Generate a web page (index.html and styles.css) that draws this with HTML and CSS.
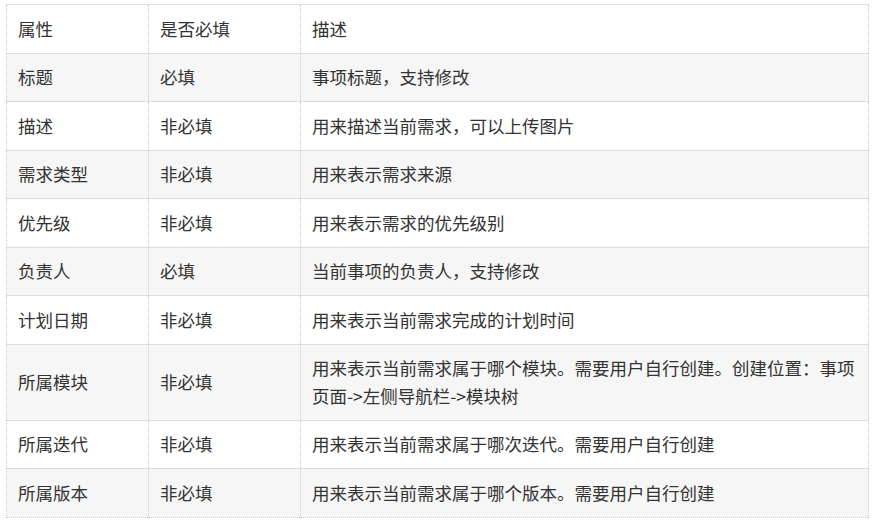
FILE: index.html
```html
<!DOCTYPE html>
<html lang="zh-CN">
<head>
<meta charset="utf-8">
<link rel="stylesheet" href="styles.css">
</head>
<body>
<table class="attr-table">
  <colgroup>
    <col class="col-a">
    <col class="col-b">
    <col class="col-c">
  </colgroup>
  <thead>
    <tr><th>属性</th><th>是否必填</th><th>描述</th></tr>
  </thead>
  <tbody>
    <tr><td>标题</td><td>必填</td><td>事项标题，支持修改</td></tr>
    <tr><td>描述</td><td>非必填</td><td>用来描述当前需求，可以上传图片</td></tr>
    <tr><td>需求类型</td><td>非必填</td><td>用来表示需求来源</td></tr>
    <tr><td>优先级</td><td>非必填</td><td>用来表示需求的优先级别</td></tr>
    <tr><td>负责人</td><td>必填</td><td>当前事项的负责人，支持修改</td></tr>
    <tr><td>计划日期</td><td>非必填</td><td>用来表示当前需求完成的计划时间</td></tr>
    <tr><td>所属模块</td><td>非必填</td><td>用来表示当前需求属于哪个模块。需要用户自行创建。创建位置：事项页面-&gt;左侧导航栏-&gt;模块树</td></tr>
    <tr><td>所属迭代</td><td>非必填</td><td>用来表示当前需求属于哪次迭代。需要用户自行创建</td></tr>
    <tr><td>所属版本</td><td>非必填</td><td>用来表示当前需求属于哪个版本。需要用户自行创建</td></tr>
  </tbody>
</table>
</body>
</html>
```

FILE: styles.css
```css
html, body {
  margin: 0;
  padding: 0;
  background: #ffffff;
}
body {
  padding: 4px 0 0 6px;
  font-family: "Noto Sans CJK SC", "Noto Sans", sans-serif;
  font-size: 17.5px;
  color: #333333;
}
.attr-table {
  border-collapse: collapse;
  width: 862px;
  table-layout: fixed;
  border: 1px dotted #c8c8c8;
}
.col-a { width: 142px; }
.col-b { width: 152px; }
.col-c { width: 568px; }
.attr-table th,
.attr-table td {
  text-align: left;
  font-weight: normal;
  padding: 9.5px 10px 10.5px 11px;
  line-height: 27.5px;
  border-left: 1px dotted #c8c8c8;
  border-right: 1px dotted #c8c8c8;
  vertical-align: middle;
}
.attr-table tr {
  border-top: 1px solid #dddddd;
}
.attr-table tbody tr:nth-child(odd) {
  background: #f6f6f6;
}
```
